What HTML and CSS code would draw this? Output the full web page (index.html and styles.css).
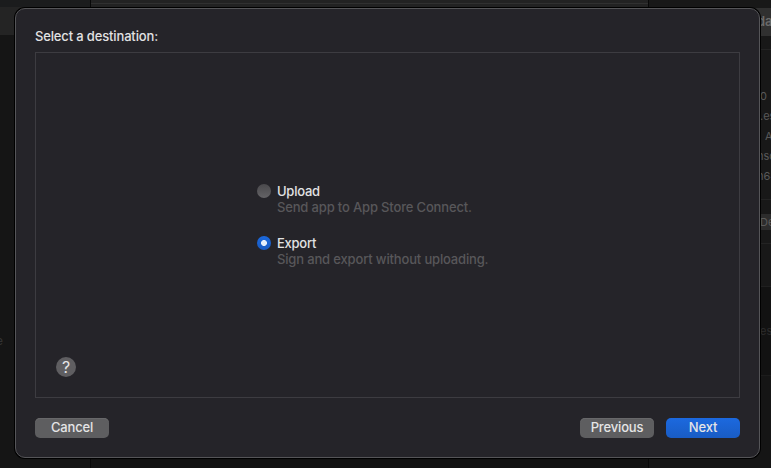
FILE: index.html
```html
<!DOCTYPE html>
<html lang="en">
<head>
<meta charset="utf-8">
<title>Distribute App</title>
<link rel="stylesheet" href="styles.css">
</head>
<body>
<div class="window">
  <aside class="sidebar">
    <div class="sidebar-top"></div>
    <div class="sidebar-selected"></div>
    <div class="sidebar-item">e</div>
  </aside>
  <section class="content"><div class="content-toolbar"></div></section>
  <aside class="inspector">
    <div class="action">da</div>
    <div class="details">
      <span>0</span>
      <span>.es</span>
      <span class="indent">A</span>
      <span class="clip">nsc</span>
      <span class="clip">n64</span>
    </div>
    <div class="download"><span>De</span></div>
    <div class="gap"></div>
    <div class="description">es</div>
    <div class="remainder"></div>
  </aside>
</div>
<main class="dialog" role="dialog" aria-labelledby="title">
  <h1 class="title" id="title">Select a destination:</h1>
  <div class="panel">
    <div class="options">
      <label class="option">
        <i class="radio"></i>
        <span class="name">Upload</span>
        <span class="hint">Send app to App Store Connect.</span>
      </label>
      <label class="option">
        <i class="radio selected"></i>
        <span class="name">Export</span>
        <span class="hint">Sign and export without uploading.</span>
      </label>
    </div>
    <button class="help" aria-label="Help">?</button>
  </div>
  <footer class="actions">
    <button class="button">Cancel</button>
    <button class="button previous">Previous</button>
    <button class="button primary">Next</button>
  </footer>
</main>
</body>
</html>
```
FILE: styles.css
```css
* { box-sizing: border-box; }
body {
  margin: 0;
  width: 771px;
  height: 468px;
  overflow: hidden;
  position: relative;
  background: #141414;
  font-family: Inter, "Liberation Sans", sans-serif;
  font-size: 13px;
}
button { border: 0; padding: 0; font: inherit; letter-spacing: inherit; }

.window {
  display: grid;
  grid-template-columns: 91px 558px 122px;
  height: 468px;
}
.sidebar { border-right: 1px solid #080808; background: #151515; }
.sidebar-top { height: 7px; background: #1b1c1d; }
.sidebar-selected { height: 28px; background: #242424; }
.sidebar-item { margin-top: 299px; margin-left: -4px; color: #333; line-height: 14px; font-size: 12px; }
.content { border-right: 1px solid #080808; background: #121212; }
.content-toolbar { height: 7px; background: linear-gradient(#222 3px, #303030 3px 4px, #222 4px); }

.inspector {
  padding-top: 8px;
  background: #181818;
  color: #585858;
  font-size: 11px;
}
.action {
  height: 28px;
  padding-left: 108px;
  background: #303030;
  color: #6a6a6a;
  font-size: 13px;
  font-weight: 600;
  line-height: 27px;
}
.details {
  display: flex;
  flex-direction: column;
  height: 150px;
  margin-top: 13px;
  padding: 36px 0 0 111px;
  border-top: 1px solid #232323;
  white-space: nowrap;
  line-height: 20px;
}
.indent { padding-left: 5px; }
.clip { margin-left: -3px; }
.download {
  height: 45px;
  padding: 14px 0 0 100px;
  border-top: 1px solid #232323;
  border-bottom: 1px solid #232323;
}
.download span {
  display: block;
  height: 16px;
  padding-left: 11px;
  background: #2c2c2c;
  color: #5a5a5a;
  line-height: 16px;
}
.gap { height: 43px; border-bottom: 1px solid #202020; }
.description {
  height: 88px;
  padding: 36px 0 0 111px;
  background: #121212;
  color: #2c2c2c;
  line-height: 16px;
}
.remainder { height: 93px; border-top: 1px solid #1c1c1c; background: #151515; }

.dialog {
  position: absolute;
  top: 8px;
  left: 15px;
  display: flex;
  flex-direction: column;
  width: 745px;
  height: 450px;
  padding: 19px;
  border: 1px solid #555558;
  border-radius: 10px;
  box-shadow: 0 0 0 1px #000;
  background: #252429;
  color: #e2e2e3;
  font-weight: 450;
  letter-spacing: -0.16px;
}
.title {
  height: 24px;
  margin: 0;
  font-size: 13px;
  font-weight: inherit;
  line-height: 17px;
  letter-spacing: -0.15px;
}
.panel {
  display: flex;
  flex-direction: column;
  height: 346px;
  padding: 130px 20px 20px 221px;
  border: 1px solid #3d3c41;
}
.options { display: grid; gap: 20px; }
.option {
  display: grid;
  grid-template-columns: 14px 1fr;
  column-gap: 6px;
  grid-auto-rows: 16px;
  line-height: 16px;
  white-space: nowrap;
}
.name { letter-spacing: -0.25px; }
.radio {
  width: 14px;
  height: 14px;
  margin-top: 1px;
  border-radius: 50%;
  background: linear-gradient(#4a494c, #646366);
}
.radio.selected {
  background: radial-gradient(circle, #e5eefb 2.6px, transparent 3.3px), linear-gradient(#1b68dc, #195bc2);
}
.hint { grid-column: 2; color: #58575a; }
.help {
  width: 20px;
  height: 20px;
  margin-top: auto;
  margin-left: -201px;
  border-radius: 50%;
  background: #5f5e61;
  color: #e5e5e6;
  font-size: 16px;
  font-weight: 400;
  line-height: 20px;
}
.actions { display: flex; margin-top: 20px; }
.button {
  width: 74px;
  height: 20px;
  padding-bottom: 2px;
  border-radius: 5px;
  background: #5e5e60;
  box-shadow: inset 0 1px #68686a;
  color: #e5e5e6;
  line-height: 17px;
}
.previous { margin-left: auto; }
.primary { margin-left: 12px; background: linear-gradient(#1c69df, #195cc4); box-shadow: none; }
```
